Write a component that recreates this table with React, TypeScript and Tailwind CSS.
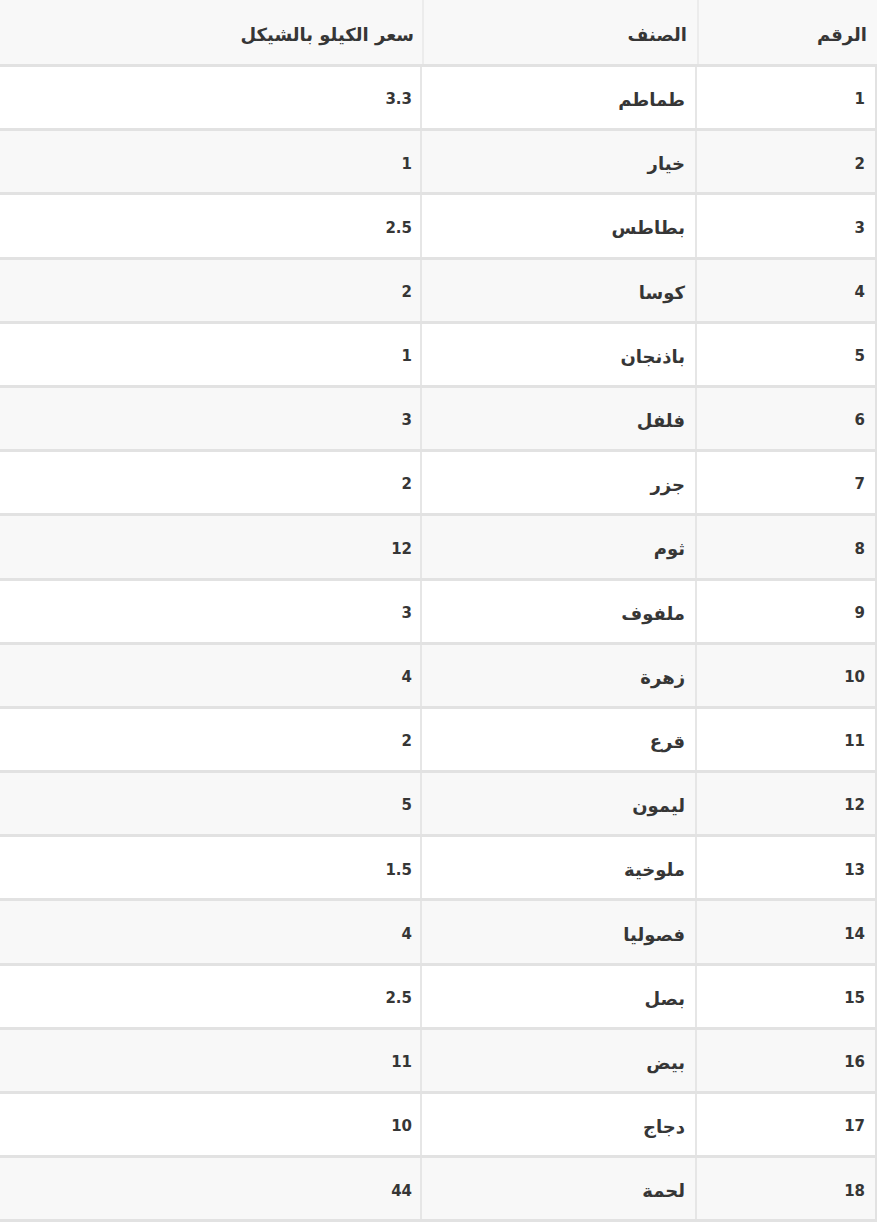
const rows = [
  { n: 1, name: "طماطم", price: "3.3" },
  { n: 2, name: "خيار", price: "1" },
  { n: 3, name: "بطاطس", price: "2.5" },
  { n: 4, name: "كوسا", price: "2" },
  { n: 5, name: "باذنجان", price: "1" },
  { n: 6, name: "فلفل", price: "3" },
  { n: 7, name: "جزر", price: "2" },
  { n: 8, name: "ثوم", price: "12" },
  { n: 9, name: "ملفوف", price: "3" },
  { n: 10, name: "زهرة", price: "4" },
  { n: 11, name: "قرع", price: "2" },
  { n: 12, name: "ليمون", price: "5" },
  { n: 13, name: "ملوخية", price: "1.5" },
  { n: 14, name: "فصوليا", price: "4" },
  { n: 15, name: "بصل", price: "2.5" },
  { n: 16, name: "بيض", price: "11" },
  { n: 17, name: "دجاج", price: "10" },
  { n: 18, name: "لحمة", price: "44" },
];

export default function App() {
  return (
    <div
      dir="rtl"
      className="w-[877px] bg-white text-[#363636] font-bold font-['DejaVu_Sans',sans-serif]"
    >
      <div className="grid grid-cols-[180px_275px_1fr] h-[67px] bg-[#f8f8f8] border-b-[3px] border-[#e2e2e2] text-[18px]">
        <div className="flex items-center pr-[10px] pt-[4px] border-l-2 border-[#ececec]">الرقم</div>
        <div className="flex items-center pr-[10px] pt-[4px] border-l-2 border-[#ececec]">الصنف</div>
        <div className="flex items-center pr-[8px] pt-[4px]">سعر الكيلو بالشيكل</div>
      </div>
      {rows.map((r, i) => (
        <div
          key={r.n}
          className={`grid grid-cols-[180px_275px_1fr] h-[64.2px] border-b-[3px] border-[#e2e2e2] border-r-2 ${
            i % 2 === 0 ? "bg-white" : "bg-[#f8f8f8]"
          }`}
        >
          <div className="flex items-center pr-[10px] pt-[4px] text-[15px] border-l-2 border-[#e6e6e6]">{r.n}</div>
          <div className="flex items-center pr-[10px] pt-[4px] text-[18px] border-l-2 border-[#e6e6e6]">{r.name}</div>
          <div className="flex items-center pr-[8px] pt-[4px] text-[15px]">{r.price}</div>
        </div>
      ))}
    </div>
  );
}
